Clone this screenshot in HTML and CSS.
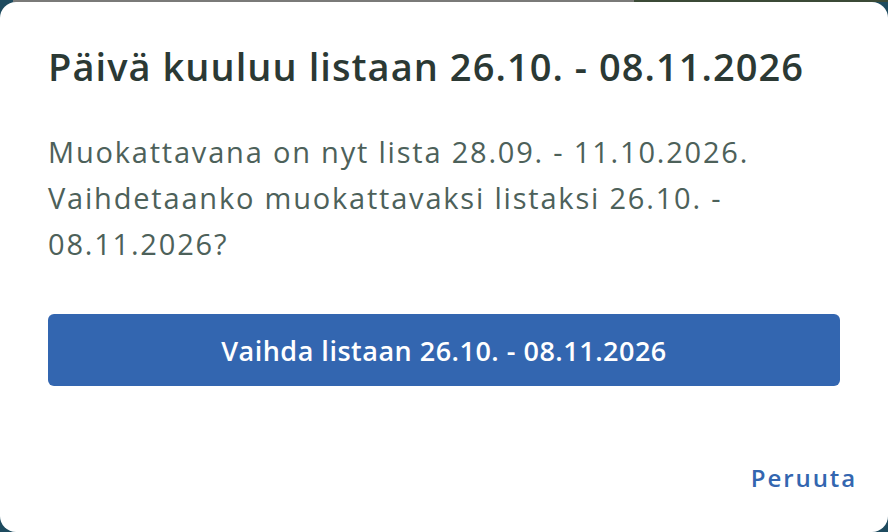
FILE: index.html
```html
<!DOCTYPE html>
<html lang="fi">
<head>
<meta charset="utf-8">
<title>Vaihda listaa</title>
<link rel="stylesheet" href="styles.css">
</head>
<body>
<div class="backdrop">
  <div class="dialog" role="dialog">
    <h1 class="title">Päivä kuuluu listaan 26.10. - 08.11.2026</h1>
    <p class="message">Muokattavana on nyt lista 28.09. - 11.10.2026. Vaihdetaanko muokattavaksi listaksi 26.10. - 08.11.2026?</p>
    <button class="primary" type="button">Vaihda listaan 26.10. - 08.11.2026</button>
    <div class="actions">
      <button class="link" type="button">Peruuta</button>
    </div>
  </div>
</div>
</body>
</html>
```
FILE: styles.css
```css
html, body {
  margin: 0;
  padding: 0;
  width: 888px;
  height: 532px;
  overflow: hidden;
}
body {
  background: #1e4b5f;
}
.backdrop {
  height: 532px;
  background: linear-gradient(to right, #1e4b5f 0, #1e4b5f 13px, #7a7a78 13px, #7a7a78 634px, #3b4a36 634px);
  background-size: 100% 2px;
  background-repeat: no-repeat;
  padding-top: 2px;
  box-sizing: border-box;
}
.dialog {
  height: 530px;
  box-sizing: border-box;
  background: #ffffff;
  border-radius: 16px;
  padding: 40px 31px 0 48px;
  display: flex;
  flex-direction: column;
}
.title {
  margin: 0;
  font-family: "Open Sans", "Noto Sans", sans-serif;
  font-weight: 550;
  font-size: 38px;
  line-height: 48px;
  letter-spacing: 1.05px;
  color: #2b3934;
}
.message {
  margin: 39px 17px 0 0;
  font-family: "Open Sans", "Noto Sans", sans-serif;
  font-weight: 400;
  font-size: 29px;
  line-height: 46px;
  letter-spacing: 1.8px;
  color: #4d615a;
}
.primary {
  margin: 47px 17px 0 0;
  height: 72px;
  border: none;
  border-radius: 6px;
  background: #3366b0;
  color: #ffffff;
  font-family: "Open Sans", "Noto Sans", sans-serif;
  font-weight: 600;
  font-size: 27px;
  letter-spacing: 0.5px;
  cursor: pointer;
}
.actions {
  margin-top: 76px;
  display: flex;
  justify-content: flex-end;
}
.link {
  border: none;
  background: none;
  padding: 0;
  color: #3366b0;
  font-family: "Open Sans", "Noto Sans", sans-serif;
  font-weight: 550;
  font-size: 24px;
  line-height: 32px;
  letter-spacing: 1.9px;
  cursor: pointer;
}
```
